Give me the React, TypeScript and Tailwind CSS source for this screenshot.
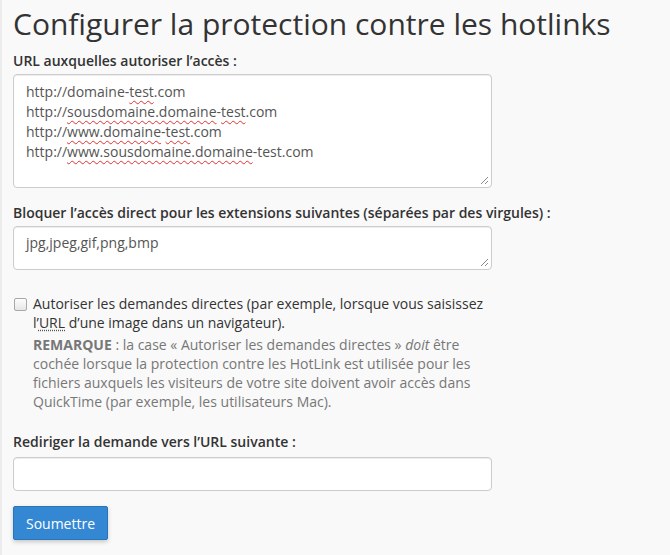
import React from "react";

const wavy = "underline decoration-wavy decoration-[#e03030] decoration-1 underline-offset-[3px]";

function ResizeGrip() {
  return (
    <svg className="absolute bottom-[2px] right-[2px]" width="9" height="9" viewBox="0 0 9 9">
      <path d="M8 1 L1 8 M8 5 L5 8" stroke="#8a8a8a" strokeWidth="1" />
    </svg>
  );
}

export default function App() {
  return (
    <div
      className="min-h-[555px] w-[670px] border-l-2 border-[#ececec] bg-[#f9f9f9] pl-[11px] pt-[4px] text-[#333]"
      style={{ fontFamily: "'Open Sans', sans-serif" }}
    >
      <h1 className="text-[30px] leading-[40px] font-normal text-[#333]">
        Configurer la protection contre les hotlinks
      </h1>

      <label className="mt-[7px] block text-[14px] leading-[20px] font-semibold">
        URL auxquelles autoriser l’accès :
      </label>
      <div className="relative mt-[3px] h-[114px] w-[479px] rounded-[4px] border border-[#cccccc] bg-white px-[12px] pt-[7px] text-[14px] leading-[20px] text-[#555] shadow-[inset_0_1px_1px_rgba(0,0,0,0.075)]">
        <div>http://domaine-<span className={wavy}>test</span>.com</div>
        <div>
          http://<span className={wavy}>sousdomaine.domaine</span>-<span className={wavy}>test</span>.com
        </div>
        <div>
          http://<span className={wavy}>www.domaine</span>-<span className={wavy}>test</span>.com
        </div>
        <div>
          http://<span className={wavy}>www.sousdomaine.domaine</span>-test.com
        </div>
        <ResizeGrip />
      </div>

      <label className="mt-[15px] block text-[14px] leading-[20px] font-semibold">
        Bloquer l’accès direct pour les extensions suivantes (séparées par des virgules) :
      </label>
      <div className="relative mt-[3px] h-[44px] w-[479px] rounded-[4px] border border-[#cccccc] bg-white px-[12px] pt-[6px] text-[14px] leading-[20px] text-[#555] shadow-[inset_0_1px_1px_rgba(0,0,0,0.075)]">
        jpg,jpeg,gif,png,bmp
        <ResizeGrip />
      </div>

      <div className="mt-[24px] flex items-start gap-[6px]">
        <span className="mt-[4px] ml-[1px] block h-[13px] w-[13px] shrink-0 rounded-[2px] border border-[#a9a9a9] bg-gradient-to-b from-[#fdfdfd] to-[#e6e6e6]" />
        <div className="w-[460px]">
          <div className="text-[14px] leading-[19px] text-[#333]">
            Autoriser les demandes directes (par exemple, lorsque vous saisissez l’<abbr className="underline decoration-dotted decoration-[#555] underline-offset-[2px]">URL</abbr> d’une
            image dans un navigateur).
          </div>
          <p className="mt-[3px] text-[14px] leading-[19px] text-[#777]">
            <b className="font-bold">REMARQUE</b> : la case « Autoriser les demandes directes » <i>doit</i> être
            cochée lorsque la protection contre les HotLink est utilisée pour les fichiers auxquels les
            visiteurs de votre site doivent avoir accès dans QuickTime (par exemple, les utilisateurs Mac).
          </p>
        </div>
      </div>

      <label className="mt-[21px] block text-[14px] leading-[20px] font-semibold">
        Rediriger la demande vers l’URL suivante :
      </label>
      <div className="mt-[5px] h-[34px] w-[479px] rounded-[4px] border border-[#cccccc] bg-white shadow-[inset_0_1px_1px_rgba(0,0,0,0.075)]" />

      <button className="mt-[15px] h-[34px] w-[95px] rounded-[2px] border border-[#2a75b9] bg-[#3487d3] text-[14px] text-white shadow-[0_2px_4px_rgba(0,0,0,0.2)]">
        Soumettre
      </button>
    </div>
  );
}
